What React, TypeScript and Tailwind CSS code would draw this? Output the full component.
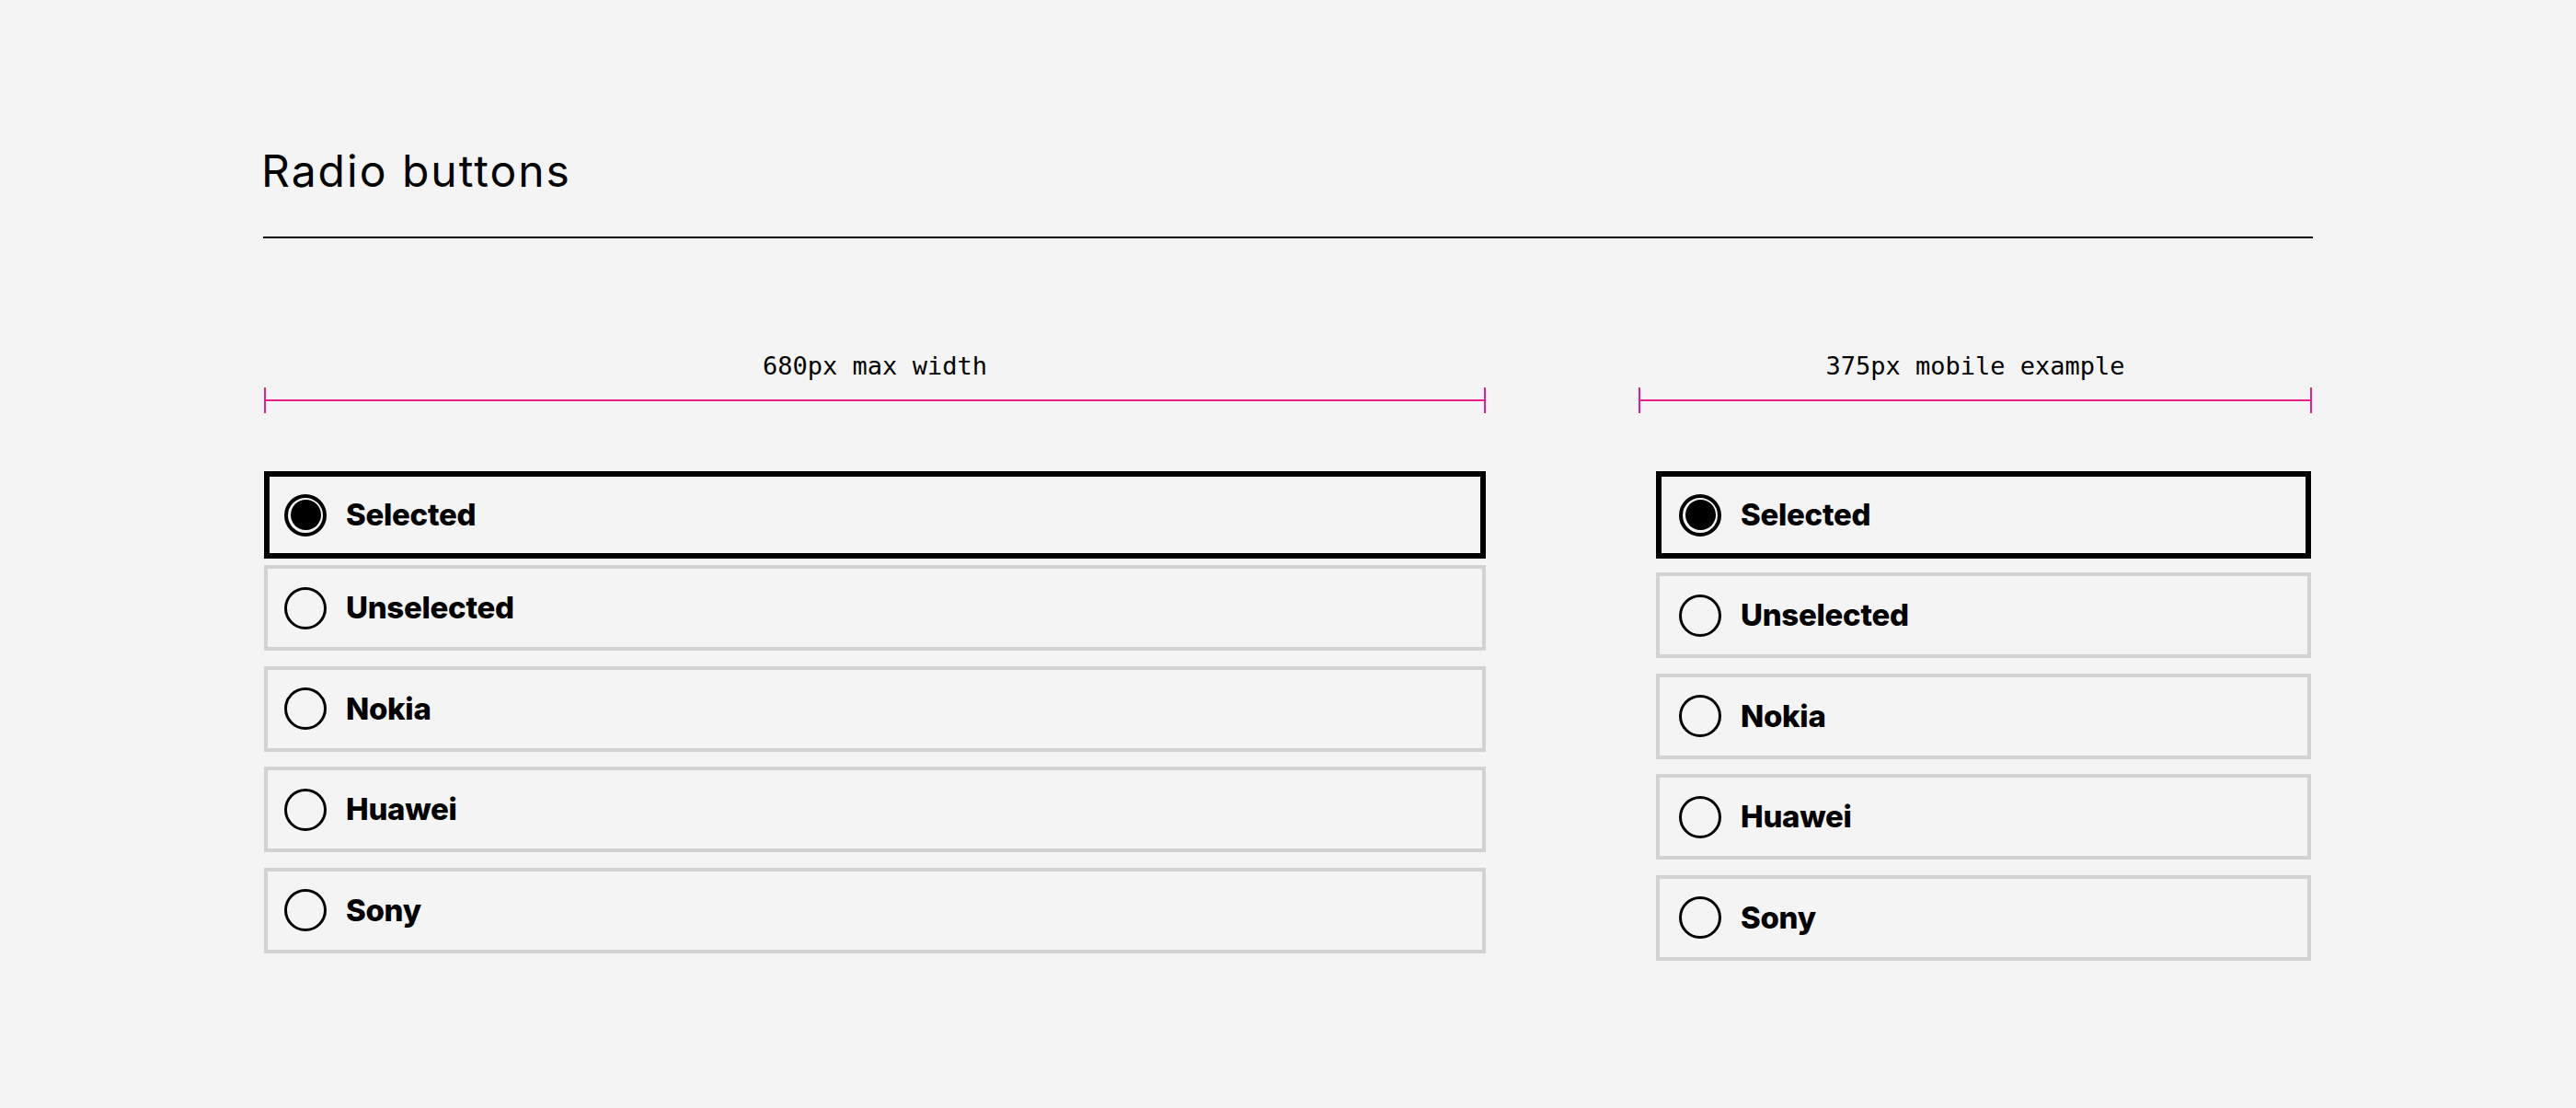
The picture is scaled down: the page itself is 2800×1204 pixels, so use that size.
import React, { useState } from 'react';

const options = ['Selected', 'Unselected', 'Nokia', 'Huawei', 'Sony'];

function Measure({ label }: { label: string }) {
    return (
        <div>
            <p className="text-center text-[27px] leading-none text-black font-['DejaVu_Sans_Mono',monospace]">{label}</p>
            <div className="mt-[10px] h-[28px] flex items-center">
                <span className="w-[2px] h-full bg-[#e91e8c]" />
                <span className="flex-1 h-[2px] bg-[#e91e8c]" />
                <span className="w-[2px] h-full bg-[#e91e8c]" />
            </div>
        </div>
    );
}

function RadioRow({ label, checked, wide, onPick }: { label: string; checked: boolean; wide: boolean; onPick: () => void }) {
    const pad = checked ? (wide ? 'pl-[16px]' : 'pl-[19px]') : (wide ? 'pl-[18px]' : 'pl-[21px]');
    return (
        <div
            onClick={onPick}
            className={`flex items-center gap-[21px] cursor-pointer ${pad} ${checked ? 'h-[95px] border-[6px] border-black' : 'h-[93px] border-[4px] border-[#d2d2d2]'}`}
        >
            <span className={`flex items-center justify-center w-[46px] h-[46px] rounded-full border-black shrink-0 ${checked ? 'border-[4px]' : 'border-[3.5px]'}`}>
                {checked && <span className="w-[33px] h-[33px] rounded-full bg-black" />}
            </span>
            <span className="text-[33px] font-extrabold leading-none tracking-[-0.3px] text-black">{label}</span>
        </div>
    );
}

function RadioGroup({ wide }: { wide: boolean }) {
    const [value, setValue] = useState('Selected');
    return (
        <div className="flex flex-col">
            {options.map((opt, i) => (
                <div key={opt} className={i === 0 ? '' : i === 1 ? (wide ? 'mt-[7px]' : 'mt-[15px]') : 'mt-[16.67px]'}>
                    <RadioRow label={opt} checked={value === opt} wide={wide} onPick={() => setValue(opt)} />
                </div>
            ))}
        </div>
    );
}

export default function App() {
    return (
        <div className="min-h-screen bg-[#f4f4f4] pl-[286px] font-['Inter',sans-serif]">
            <div className="w-[2228px]">
                <h1 className="pt-[162px] text-[48px] leading-none font-normal tracking-[2px] text-black -ml-[2px]">Radio buttons</h1>
                <div className="mt-[47px] h-[2px] bg-black" />

                <div className="flex ml-px mt-[125px]">
                    <div className="w-[1328px]">
                        <Measure label="680px max width" />
                        <div className="mt-[63px]">
                            <RadioGroup wide />
                        </div>
                    </div>
                    <div className="w-[732px] ml-[166px]">
                        <Measure label="375px mobile example" />
                        <div className="mt-[63px] ml-[19px] w-[712px]">
                            <RadioGroup wide={false} />
                        </div>
                    </div>
                </div>
            </div>
        </div>
    );
}
